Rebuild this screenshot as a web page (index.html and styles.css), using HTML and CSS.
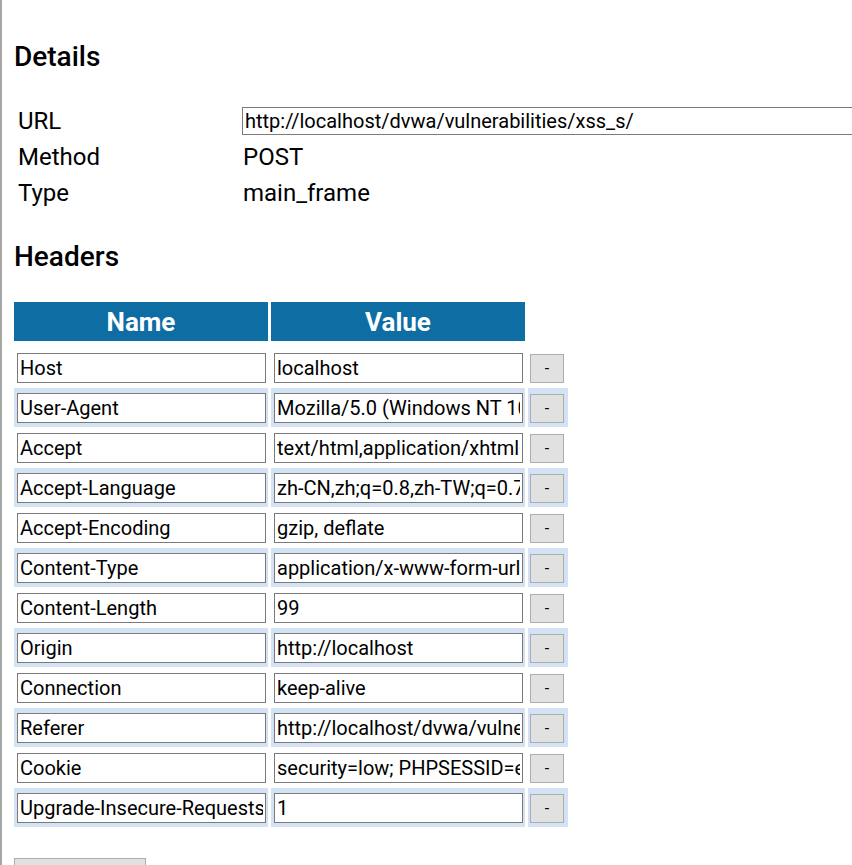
FILE: index.html
```html
<!DOCTYPE html>
<html>
<head>
<meta charset="utf-8">
<link rel="stylesheet" href="styles.css">
</head>
<body>
<div class="page">
  <h2 class="title">Details</h2>
  <div class="details">
    <div class="dlabel">URL</div><div class="dval"><input class="url" type="text" value="http://localhost/dvwa/vulnerabilities/xss_s/"></div>
    <div class="dlabel">Method</div><div class="dval">POST</div>
    <div class="dlabel">Type</div><div class="dval">main_frame</div>
  </div>
  <h2 class="title headers-title">Headers</h2>
  <table class="headers">
    <thead>
      <tr><th>Name</th><th>Value</th><th class="empty"></th></tr>
    </thead>
    <tbody>
      <tr><td><input type="text" value="Host"></td><td><input type="text" value="localhost"></td><td class="bcell"><button>-</button></td></tr>
      <tr><td><input type="text" value="User-Agent"></td><td><input type="text" value="Mozilla/5.0 (Windows NT 10.0; Win64; x64)"></td><td class="bcell"><button>-</button></td></tr>
      <tr><td><input type="text" value="Accept"></td><td><input type="text" value="text/html,application/xhtml+xml"></td><td class="bcell"><button>-</button></td></tr>
      <tr><td><input type="text" value="Accept-Language"></td><td><input type="text" value="zh-CN,zh;q=0.8,zh-TW;q=0.7"></td><td class="bcell"><button>-</button></td></tr>
      <tr><td><input type="text" value="Accept-Encoding"></td><td><input type="text" value="gzip, deflate"></td><td class="bcell"><button>-</button></td></tr>
      <tr><td><input type="text" value="Content-Type"></td><td><input type="text" value="application/x-www-form-urlencoded"></td><td class="bcell"><button>-</button></td></tr>
      <tr><td><input type="text" value="Content-Length"></td><td><input type="text" value="99"></td><td class="bcell"><button>-</button></td></tr>
      <tr><td><input type="text" value="Origin"></td><td><input type="text" value="http://localhost"></td><td class="bcell"><button>-</button></td></tr>
      <tr><td><input type="text" value="Connection"></td><td><input type="text" value="keep-alive"></td><td class="bcell"><button>-</button></td></tr>
      <tr><td><input type="text" value="Referer"></td><td><input type="text" value="http://localhost/dvwa/vulnerabilities/xss_s/"></td><td class="bcell"><button>-</button></td></tr>
      <tr><td><input type="text" value="Cookie"></td><td><input type="text" value="security=low; PHPSESSID=e"></td><td class="bcell"><button>-</button></td></tr>
      <tr><td><input type="text" value="Upgrade-Insecure-Requests"></td><td><input type="text" value="1"></td><td class="bcell"><button>-</button></td></tr>
    </tbody>
  </table>
  <button class="bottom-btn">&nbsp;</button>
</div>
</body>
</html>
```
FILE: styles.css
```css
html, body {
  margin: 0;
  padding: 0;
  background: #fff;
  overflow: hidden;
}
body {
  font-family: Roboto, "Liberation Sans", sans-serif;
  color: #000;
  height: 865px;
  border-left: 2px solid #a6a6a6;
  box-sizing: border-box;
}
.page {
  padding: 0 0 0 12px;
}
.title {
  font-size: 28px;
  font-weight: 500;
  margin: 0;
  padding-top: 40px;
  line-height: 34px;
}
.headers-title {
  padding-top: 29px;
}
.details {
  display: grid;
  grid-template-columns: 228px 1fr;
  grid-auto-rows: 36px;
  align-items: center;
  margin-top: 29px;
  font-size: 24px;
}
.dlabel {
  padding-left: 4px;
}
.dval {
  padding-left: 1px;
}
input {
  font-family: Roboto, "Liberation Sans", sans-serif;
  border: 1px solid #7a7a7a;
  border-radius: 0;
  padding: 0 2px;
  margin: 0;
  background: #fff;
  color: #000;
  box-sizing: border-box;
}
.url {
  display: block;
  margin-left: -1px;
  width: calc(100% + 1px);
  border-right: none;
  height: 28px;
  font-size: 20px;
}
.headers {
  border-spacing: 3px 1px;
  margin-left: -3px;
  margin-top: 27px;
}
.headers th {
  background: #0e6ea4;
  background-clip: padding-box;
  border-bottom: 6px solid transparent;
  color: #fff;
  font-size: 26px;
  font-weight: 700;
  height: 39px;
  padding: 0;
  width: 254px;
}
.headers th.empty {
  background: transparent;
  width: 40px;
}
.headers td {
  padding: 5px 2px 4px 3px;
  height: 30px;
}
.headers tbody tr:nth-child(even) td {
  background: #d3e3f3;
}
.headers td input {
  width: 249px;
  height: 30px;
  font-size: 20px;
  display: block;
}
.headers td.bcell {
  padding: 5px 4px 4px 2px;
}
.bcell button {
  display: block;
  width: 34px;
  height: 29px;
  background: #e1e1e1;
  border: 1px solid #adadad;
  font-family: Roboto, "Liberation Sans", sans-serif;
  font-size: 16px;
  padding: 0;
  color: #000;
}
.bottom-btn {
  display: block;
  margin-top: 30px;
  width: 132px;
  height: 30px;
  background: #e1e1e1;
  border: 1px solid #adadad;
}
```
